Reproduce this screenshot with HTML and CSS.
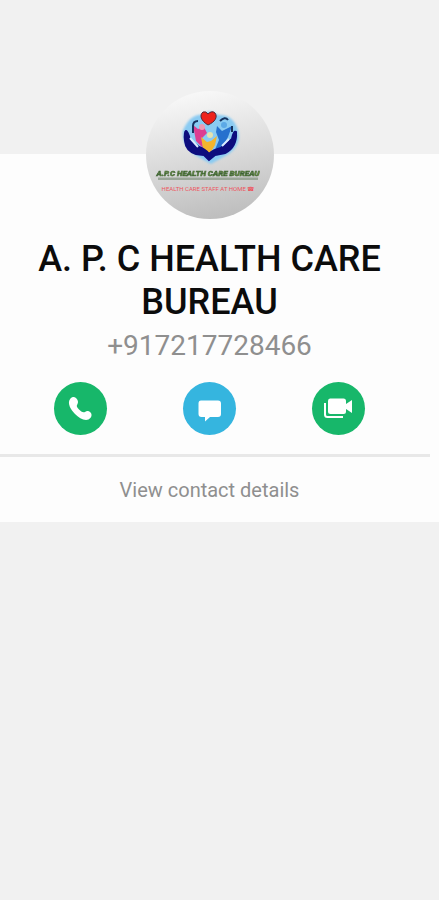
FILE: index.html
```html
<!DOCTYPE html>
<html lang="en">
<head>
<meta charset="utf-8">
<meta name="viewport" content="width=device-width, initial-scale=1">
<title>A. P. C HEALTH CARE BUREAU</title>
<link rel="stylesheet" href="styles.css">
</head>
<body>
<main class="card">
  <section class="profile">
    <svg class="avatar" viewBox="0 0 128 128" role="img" aria-label="Profile picture">
      <defs>
        <linearGradient id="silver" x1="0.4" y1="0" x2="0.6" y2="1">
          <stop offset="0" stop-color="#f8f8f8"/>
          <stop offset="0.45" stop-color="#dedede"/>
          <stop offset="1" stop-color="#bdbdbd"/>
        </linearGradient>
        <filter id="glow" x="-20%" y="-20%" width="140%" height="140%"><feGaussianBlur stdDeviation="1.2"/></filter>
        <filter id="soft"><feGaussianBlur stdDeviation="0.5"/></filter>
      </defs>
      <circle cx="64" cy="64" r="64" fill="url(#silver)"/>
      <path d="M37 39Q45 22 57 24Q63 17 72 24Q87 23 92 39Q96 55 81 64L65 73L49 64Q35 54 37 39Z" fill="#8acbf2" filter="url(#glow)"/>
      <g filter="url(#soft)">
        <path d="M47 34l5 4 6-2 3 6-5 5 1 10-7-7z" fill="#dd3d91"/>
        <path d="M55 46l6 5 4-1 6-5-2 9-6 10-6-7z" fill="#f3b52f"/>
        <path d="M71 35l5 5 10-5-4 11-7 12-7 3 5-12-3-8z" fill="#2871ce"/>
        <circle cx="56" cy="36" r="3" fill="#ed99b5"/>
        <circle cx="64" cy="44" r="3" fill="#e5e3b0"/>
        <circle cx="78" cy="34" r="3" fill="#5ba9e6"/>
        <path d="M47 42V35q0-5 5-5M74 30q5-5 8-1M86 35v6" fill="none" stroke="#14315f" stroke-width="2"/>
        <path d="M62 34C55 30 53 24 57 21Q60 20 62 23Q66 19 69 22C72 26 69 31 62 34Z" fill="#ed241c" stroke="#512638" stroke-width="1"/>
        <path d="M40 40Q38 41 39 50Q40 60 50 63L58 64L63 69L69 64L79 62Q91 56 90 41Q88 39 86 48L75 57Q67 59 63 63Q59 58 53 56L44 49Q42 41 40 40Z" fill="#0a087e" stroke="#0a087e" stroke-width="2"/>
        <path d="M44 47l8 9M83 48l-7 7" stroke="#d9edff" stroke-width="2"/>
      </g>
      <g filter="url(#soft)">
        <text class="logo-name" x="62" y="85" text-anchor="middle">A.P.C HEALTH CARE BUREAU</text>
        <path d="M12 88H112" stroke="#99a597" stroke-width="3"/>
      </g>
      <text class="logo-tagline" x="62" y="100" text-anchor="middle">HEALTH CARE STAFF AT HOME ☎</text>
    </svg>
    <h1 class="name">A. P. C HEALTH CARE BUREAU</h1>
    <p class="phone">+917217728466</p>
    <div class="actions">
      <button class="action action-green" type="button" aria-label="Call">
        <svg viewBox="0 0 53 53" aria-hidden="true"><path d="M16.5 16.500C18 15 20 14.500 22 16C24 18 24.500 20 23.500 22C22 24 23 25.500 25 27.500C27 29.500 29 31 31 30C33 28.500 35 29 36.500 30.500C38.500 32.500 37.500 36 34.500 37.500C30 39 25 36 21 32C17 28 12.500 21 16.500 16.500Z"/></svg>
      </button>
      <button class="action action-blue" type="button" aria-label="Message">
        <svg viewBox="0 0 53 53" aria-hidden="true"><path d="M18 18.500H35Q38 18.500 38 21.500V32Q38 35 35 35H27L22 39.500V35H18.500Q15.500 35 15.500 32V21.500Q15.500 18.500 18 18.500Z"/></svg>
      </button>
      <button class="action action-green" type="button" aria-label="Video call">
        <svg viewBox="0 0 53 53" aria-hidden="true"><path d="M18 16.500H31.500Q34 16.500 34 19V22L40 18V31L34 27V29.500Q34 32 31.500 32H18.500Q16 32 16 29.500V19Q16 16.500 18 16.500Z"/><path class="outline" d="M13 21V32.500Q13 35 15.500 35H31"/></svg>
      </button>
    </div>
  </section>
  <hr class="divider">
  <a class="details" href="#details">View contact details</a>
</main>
</body>
</html>
```
FILE: styles.css
```css
* { box-sizing: border-box; }

body {
  margin: 0;
  padding-top: 154px;
  background: #f1f1f1;
  font-family: Roboto, "Liberation Sans", sans-serif;
}

.card {
  background: #fdfdfd;
}

.profile {
  display: flex;
  flex-direction: column;
  align-items: center;
  padding: 0 20px 19px 0;
}

.avatar {
  width: 128px;
  height: 128px;
  margin-top: -63px;
}

.logo-name {
  font: italic 900 8px Roboto, sans-serif;
  fill: #6d8f3c;
  stroke: #3a6038;
  stroke-width: 0.5px;
}

.logo-tagline {
  font: 400 6px Roboto, sans-serif;
  fill: #ed5560;
}

.name {
  max-width: 380px;
  margin: 19px 0 0;
  color: #0c0c0c;
  font-size: 36px;
  font-weight: 500;
  line-height: 43px;
  text-align: center;
}

.phone {
  margin: 4px 0 0;
  color: #8f8f8f;
  font-size: 28px;
  line-height: 36px;
}

.actions {
  display: flex;
  justify-content: space-between;
  width: 100%;
  margin-top: 18px;
  padding: 0 54px;
}

.action {
  width: 53px;
  height: 53px;
  padding: 0;
  border: 0;
  border-radius: 50%;
}

.action svg {
  display: block;
  fill: #fff;
}

.action-green { background: #17b76a; }
.action-blue { background: #35b5df; }

.action .outline {
  fill: none;
  stroke: #fff;
  stroke-width: 2;
}

.divider {
  height: 3px;
  margin: 0 9px 0 0;
  border: 0;
  background: #e8e8e8;
}

.details {
  display: block;
  padding: 20px 20px 19px 0;
  color: #8f8f8f;
  font-size: 20px;
  line-height: 26px;
  text-align: center;
  text-decoration: none;
}
```
